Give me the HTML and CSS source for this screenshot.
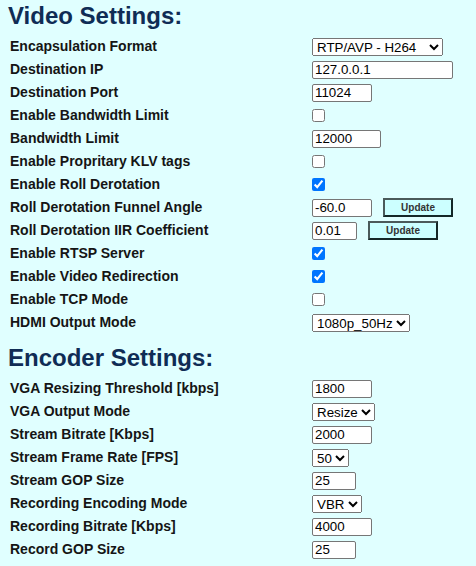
FILE: index.html
```html
<!DOCTYPE html>
<html>
<head>
<meta charset="utf-8">
<link rel="stylesheet" href="styles.css">
</head>
<body>
<h2 class="section-title">Video Settings:</h2>
<div class="form">
  <div class="label">Encapsulation Format</div>
  <div class="value"><select class="sel sel-wide"><option>RTP/AVP - H264</option></select></div>

  <div class="label">Destination IP</div>
  <div class="value"><input class="txt w141" type="text" value="127.0.0.1"></div>

  <div class="label">Destination Port</div>
  <div class="value"><input class="txt w60" type="text" value="11024"></div>

  <div class="label">Enable Bandwidth Limit</div>
  <div class="value"><input class="chk" type="checkbox"></div>

  <div class="label">Bandwidth Limit</div>
  <div class="value"><input class="txt w69" type="text" value="12000"></div>

  <div class="label">Enable Propritary KLV tags</div>
  <div class="value"><input class="chk" type="checkbox"></div>

  <div class="label">Enable Roll Derotation</div>
  <div class="value"><input class="chk" type="checkbox" checked></div>

  <div class="label">Roll Derotation Funnel Angle</div>
  <div class="value"><input class="txt w60" type="text" value="-60.0"><button class="btn">Update</button></div>

  <div class="label">Roll Derotation IIR Coefficient</div>
  <div class="value"><input class="txt w45" type="text" value="0.01"><button class="btn">Update</button></div>

  <div class="label">Enable RTSP Server</div>
  <div class="value"><input class="chk" type="checkbox" checked></div>

  <div class="label">Enable Video Redirection</div>
  <div class="value"><input class="chk" type="checkbox" checked></div>

  <div class="label">Enable TCP Mode</div>
  <div class="value"><input class="chk" type="checkbox"></div>

  <div class="label">HDMI Output Mode</div>
  <div class="value"><select class="sel"><option>1080p_50Hz</option></select></div>
</div>

<h2 class="section-title">Encoder Settings:</h2>
<div class="form">
  <div class="label">VGA Resizing Threshold [kbps]</div>
  <div class="value"><input class="txt w60" type="text" value="1800"></div>

  <div class="label">VGA Output Mode</div>
  <div class="value"><select class="sel"><option>Resize</option></select></div>

  <div class="label">Stream Bitrate [Kbps]</div>
  <div class="value"><input class="txt w60" type="text" value="2000"></div>

  <div class="label">Stream Frame Rate [FPS]</div>
  <div class="value"><select class="sel"><option>50</option></select></div>

  <div class="label">Stream GOP Size</div>
  <div class="value"><input class="txt w44" type="text" value="25"></div>

  <div class="label">Recording Encoding Mode</div>
  <div class="value"><select class="sel"><option>VBR</option></select></div>

  <div class="label">Recording Bitrate [Kbps]</div>
  <div class="value"><input class="txt w60" type="text" value="4000"></div>

  <div class="label">Record GOP Size</div>
  <div class="value"><input class="txt w44" type="text" value="25"></div>
</div>
</body>
</html>
```
FILE: styles.css
```css
html, body {
  background: #e0ffff;
}
body {
  margin: 0;
  padding: 2px 8px 0 8px;
  font-family: "Liberation Sans", Arial, sans-serif;
  color: #111;
}
.section-title {
  margin: 0 0 5px 0;
  font-size: 24px;
  line-height: 28px;
  font-weight: bold;
  color: #0f2c55;
}
.form {
  display: grid;
  grid-template-columns: 302px auto;
  grid-auto-rows: 23px;
  align-items: center;
  padding-left: 2px;
  margin-bottom: 10px;
}
.label {
  font-size: 14px;
  font-weight: bold;
  line-height: 23px;
  white-space: nowrap;
  color: #151515;
}
.value {
  display: flex;
  align-items: center;
  height: 23px;
}
.txt {
  box-sizing: border-box;
  height: 18px;
  margin: 0;
  padding: 0 2px;
  border: 1px solid #767676;
  border-radius: 2px;
  background: #fff;
  font-family: "Liberation Sans", Arial, sans-serif;
  font-size: 13.33px;
  color: #000;
}
.w141 { width: 141px; }
.w69 { width: 69px; }
.w60 { width: 60px; }
.w45 { width: 45px; }
.w44 { width: 44px; }
.sel {
  margin: 0;
  height: 18px;
  font-family: "Liberation Sans", Arial, sans-serif;
  font-size: 13.33px;
  color: #000;
}
.sel-wide {
  width: 131px;
}
.chk {
  margin: 0;
  width: 13px;
  height: 13px;
}
.btn {
  box-sizing: border-box;
  width: 70px;
  height: 19px;
  margin: 0 0 0 11px;
  padding: 0;
  border: 2px solid;
  border-color: #4a5a5a #142828 #142828 #4a5a5a;
  background: #ccffff;
  font-family: "Liberation Sans", Arial, sans-serif;
  font-size: 10px;
  font-weight: bold;
  color: #333;
}
```
